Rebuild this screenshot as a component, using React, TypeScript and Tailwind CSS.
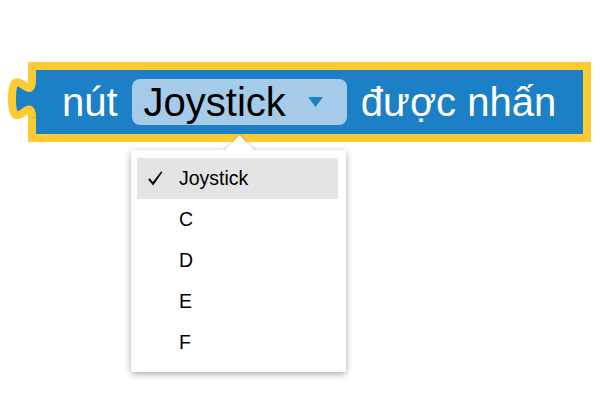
import React from 'react';

const options = ['Joystick', 'C', 'D', 'E', 'F'];

// left puzzle tab of the block (output connection)
const PuzzleTab = () => (
  <svg className="absolute left-0 top-0 w-[44px] h-[140px] pointer-events-none" viewBox="0 0 44 140">
    <path d="M32,80 c0,25 -20,-20 -20,18.75 s20,-6.25 20,18.75 L40,117.5 L40,80 Z" fill="#1c80c7" />
    <path d="M32,80 c0,25 -20,-20 -20,18.75 s20,-6.25 20,18.75" fill="none" stroke="#fcca33" strokeWidth="8" />
  </svg>
);

const Check = () => (
  <svg className="w-[16px] h-[15px]" viewBox="0 0 16 15">
    <path d="M1,8.5 L2.8,7.2 L5.8,11 L14.2,0.3 L15.4,1.3 L6.2,14.6 Z" fill="#111" />
  </svg>
);

export default function App() {
  const selected = 'Joystick';

  return (
    <div className="relative w-[600px] h-[400px] bg-white pt-[62px] pl-[28px] font-['Liberation_Sans',Arial,sans-serif]">
      {/* Block */}
      <div className="inline-flex items-center h-[80px] border-[8px] border-[#fcca33] bg-[#1c80c7] pl-[26px] pr-[27px] text-[40px] leading-none">
        <span className="text-white">nút</span>
        <div className="ml-[14px] h-[46px] flex items-center rounded-[8px] bg-[#a6cbe8] pl-[12px] pr-[24px]">
          <span className="text-black">Joystick</span>
          <svg className="ml-[22px] w-[15px] h-[10px]" viewBox="0 0 15 10">
            <polygon points="0,0 15,0 7.5,10" fill="#1c80c7" />
          </svg>
        </div>
        <span className="ml-[14px] text-white">được nhấn</span>
      </div>
      <PuzzleTab />

      {/* Dropdown menu */}
      <div className="relative mt-[8px] ml-[103px] w-[215px] rounded-[3px] bg-white shadow-[0_2px_7px_rgba(0,0,0,0.35)]">
        <div className="absolute left-[97px] top-[-10px] w-[23px] h-[23px] rotate-45 bg-white shadow-[-1px_-1px_2px_rgba(0,0,0,0.12)]" />
        <div className="relative z-10 rounded-[3px] bg-white pt-[8px] pb-[9px] pl-[6px] pr-[8px] text-[19.5px] text-black">
          {options.map((opt) => (
            <div
              key={opt}
              className={`h-[41px] flex items-center ${opt === selected ? 'bg-[#e4e4e4]' : ''}`}
            >
              <span className="w-[42px] pl-[10px] flex items-center">
                {opt === selected && <Check />}
              </span>
              <span>{opt}</span>
            </div>
          ))}
        </div>
      </div>
    </div>
  );
}
